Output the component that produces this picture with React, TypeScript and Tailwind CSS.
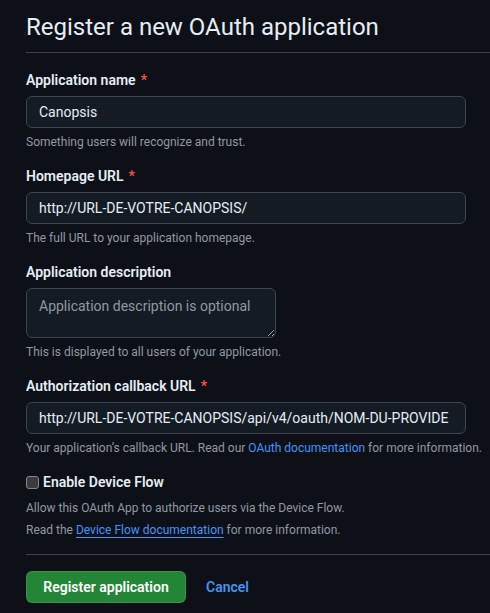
const FONT = { fontFamily: 'Roboto, "Noto Sans", sans-serif' };

function Label({ children, required }: { children: React.ReactNode; required?: boolean }) {
  return (
    <label className="block h-5 text-sm leading-5 font-semibold text-[#e6edf3]">
      {children}
      {required && <span className="ml-[5px] text-[#f85149]">*</span>}
    </label>
  );
}

function Note({ children }: { children: React.ReactNode }) {
  return <p className="mt-[5px] text-xs leading-[18px] text-[#9198a1]">{children}</p>;
}

function TextField({ value, placeholder }: { value?: string; placeholder?: string }) {
  return (
    <input
      readOnly
      value={value ?? ''}
      placeholder={placeholder}
      className="mt-[6px] block h-8 w-[440px] rounded-md border border-[#3d444d] bg-[#151b23] px-3 text-sm text-[#e6edf3] outline-none placeholder:text-[#9198a1]"
    />
  );
}

export default function App() {
  return (
    <div className="min-h-[613px] overflow-hidden bg-[#0d1117] pl-[26px]" style={FONT}>
      <h1 className="border-b border-[#3d444d] pt-3 pb-[10px] text-2xl leading-[30px] font-normal text-[#e6edf3]">
        Register a new OAuth application
      </h1>

      <form className="pt-[17px]">
        <div>
          <Label required>Application name</Label>
          <TextField value="Canopsis" />
          <Note>Something users will recognize and trust.</Note>
        </div>

        <div className="mt-[15px]">
          <Label required>Homepage URL</Label>
          <TextField value="http://URL-DE-VOTRE-CANOPSIS/" />
          <Note>The full URL to your application homepage.</Note>
        </div>

        <div className="mt-[15px]">
          <Label>Application description</Label>
          <textarea
            readOnly
            placeholder="Application description is optional"
            className="mt-[6px] block h-[50px] w-[250px] resize rounded-md border border-[#3d444d] bg-[#151b23] px-3 pt-[7px] text-sm leading-5 text-[#e6edf3] outline-none placeholder:text-[#9198a1]"
          />
          <Note>This is displayed to all users of your application.</Note>
        </div>

        <div className="mt-[15px]">
          <Label required>Authorization callback URL</Label>
          <TextField value="http://URL-DE-VOTRE-CANOPSIS/api/v4/oauth/NOM-DU-PROVIDE" />
          <Note>
            Your application’s callback URL. Read our{' '}
            <a className="text-[#4493f8]">OAuth documentation</a> for more information.
          </Note>
        </div>

        <div className="mt-[15px]">
          <label className="flex h-5 items-center text-sm font-semibold text-[#e6edf3]">
            <span className="mr-[4px] box-border h-[13px] w-[13px] rounded-[3px] border border-[#858585] bg-[#3b3b3b]" />
            Enable Device Flow
          </label>
          <p className="mt-[7px] text-xs leading-[18px] text-[#9198a1]">
            Allow this OAuth App to authorize users via the Device Flow.
          </p>
          <p className="mt-[4px] text-xs leading-[18px] text-[#9198a1]">
            Read the{' '}
            <a className="text-[#4493f8] underline underline-offset-[3px]">Device Flow documentation</a> for
            more information.
          </p>
        </div>

        <div className="mt-[15px] flex items-center border-t border-[#3d444d] pt-4">
          <button
            type="button"
            className="h-8 w-[160px] rounded-md border border-[#ffffff1a] bg-[#238636] text-sm font-semibold text-white"
          >
            Register application
          </button>
          <a className="ml-5 text-sm font-semibold text-[#4493f8]">Cancel</a>
        </div>
      </form>
    </div>
  );
}
